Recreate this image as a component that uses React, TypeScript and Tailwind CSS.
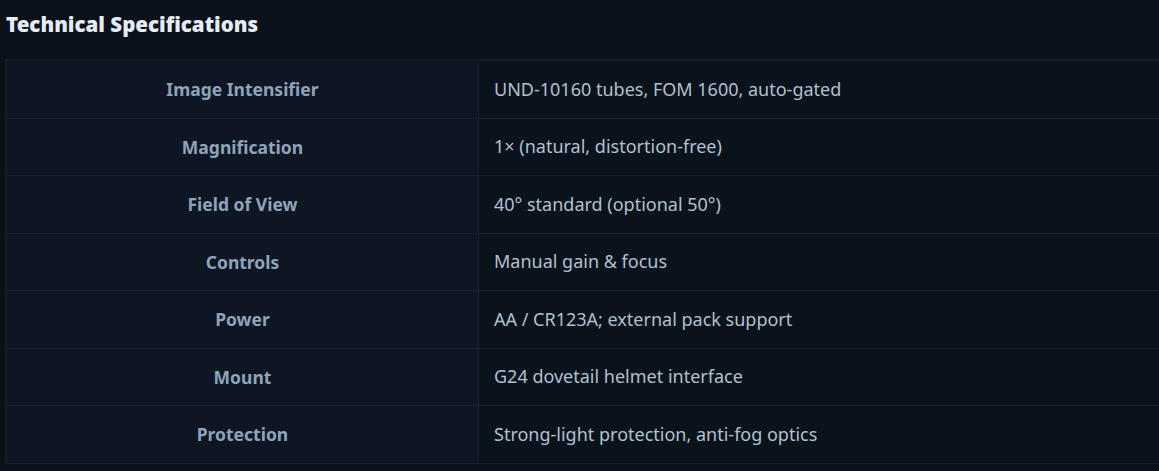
const specs = [
  { label: "Image Intensifier", value: "UND-10160 tubes, FOM 1600, auto-gated" },
  { label: "Magnification", value: "1× (natural, distortion-free)" },
  { label: "Field of View", value: "40° standard (optional 50°)" },
  { label: "Controls", value: "Manual gain & focus" },
  { label: "Power", value: "AA / CR123A; external pack support" },
  { label: "Mount", value: "G24 dovetail helmet interface" },
  { label: "Protection", value: "Strong-light protection, anti-fog optics" },
];

export default function App() {
  return (
    <div
      className="w-[1159px] h-[471px] overflow-hidden bg-[#0b111b]"
      style={{ fontFamily: '"Noto Sans", "Open Sans", sans-serif' }}
    >
      <h2 className="h-[59px] pl-[6px] pt-[10px] text-[20.5px] leading-[28px] font-black text-[#e6ecf5]">
        Technical Specifications
      </h2>
      <div className="ml-[5px] w-[1200px] border-t-[2px] border-l-[2px] border-[#141d27]">
        {specs.map((spec) => (
          <div key={spec.label} className="flex h-[57.5px] border-b border-[#16212d]">
            <div className="w-[472px] shrink-0 flex items-center justify-center bg-[#0d1622] border-r border-[#16212d] text-[17.5px] font-bold text-[#8fa3bb]">
              {spec.label}
            </div>
            <div className="flex-1 flex items-center pl-[15px] bg-[#0a121c] text-[18px] text-[#b3c0cf]">
              {spec.value}
            </div>
          </div>
        ))}
      </div>
    </div>
  );
}
